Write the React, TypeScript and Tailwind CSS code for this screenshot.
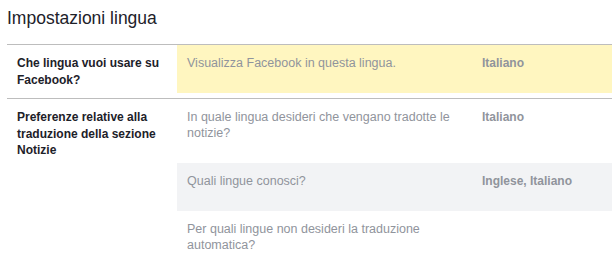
import React from "react"

type SubRow = { question: string; value?: string; tone?: "yellow" | "gray" }

const sections: { label: string; rows: SubRow[] }[] = [
  {
    label: "Che lingua vuoi usare su Facebook?",
    rows: [
      { question: "Visualizza Facebook in questa lingua.", value: "Italiano", tone: "yellow" },
    ],
  },
  {
    label: "Preferenze relative alla traduzione della sezione Notizie",
    rows: [
      { question: "In quale lingua desideri che vengano tradotte le notizie?", value: "Italiano" },
      { question: "Quali lingue conosci?", value: "Inglese, Italiano", tone: "gray" },
      { question: "Per quali lingue non desideri la traduzione automatica?" },
    ],
  },
]

function Row({ row }: { row: SubRow }) {
  const bg =
    row.tone === "yellow" ? "bg-[#fff6c0]" : row.tone === "gray" ? "bg-[#f2f3f5]" : "bg-white"
  return (
    <div className={`flex pl-[10px] pt-[10px] pb-[22px] ${bg}`}>
      <div className="w-[285px] text-[12.5px] leading-[16px] text-[#90949c]">{row.question}</div>
      {row.value && (
        <div className="ml-[10px] text-[12px] leading-[16px] font-bold text-[#90949c]">
          {row.value}
        </div>
      )}
    </div>
  )
}

export default function App() {
  return (
    <div className="w-[612px] h-[273px] bg-white pl-[7px] overflow-hidden font-['Liberation_Sans',Helvetica,Arial,sans-serif]">
      <div className="h-[44px] pt-[7px] text-[17.5px] leading-[22px] text-[#1d2129]">
        Impostazioni lingua
      </div>
      {sections.map((section, i) => (
        <div key={i} className={`flex border-t border-[#bdbdbd] ${i === 0 ? "pb-[5px]" : ""}`}>
          <div className="w-[170px] shrink-0 pl-[10px] pr-[8px] pt-[10px] text-[12px] leading-[16.5px] font-bold text-[#1d2129]">
            {section.label}
          </div>
          <div className="flex-1">
            {section.rows.map((row, j) => (
              <Row key={j} row={row} />
            ))}
          </div>
        </div>
      ))}
    </div>
  )
}
